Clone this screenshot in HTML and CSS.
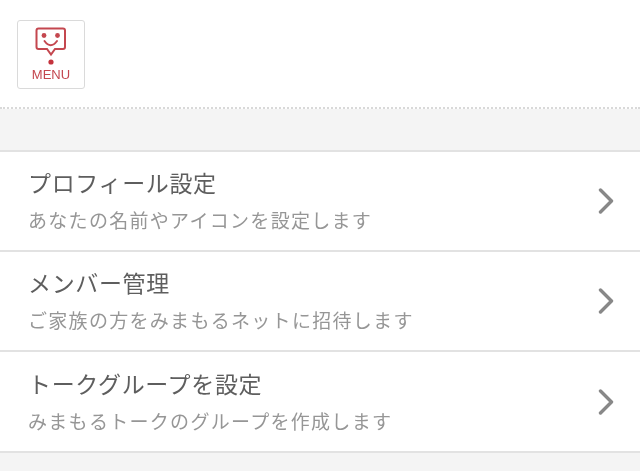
FILE: index.html
```html
<!DOCTYPE html>
<html lang="ja">
<head>
<meta charset="utf-8">
<title>メニュー</title>
<link rel="stylesheet" href="styles.css">
</head>
<body>
<div class="page">
<header class="header">
  <button class="menu-btn" type="button">
    <svg class="menu-icon" width="32" height="42" viewBox="0 0 32 42" fill="none">
      <path d="M3.5 1.5H28Q30 1.5 30 3.5V20Q30 22 28 22H20L16 27.5L12 22H3.5Q1.5 22 1.5 20V3.5Q1.5 1.5 3.5 1.5Z" stroke="#c4474f" stroke-width="2"/>
      <circle cx="9" cy="8.5" r="2.4" fill="#c4474f"/>
      <circle cx="22.5" cy="8.5" r="2.4" fill="#c4474f"/>
      <path d="M9.5 14Q15.7 22.5 22 14" stroke="#c4474f" stroke-width="2" stroke-linecap="round"/>
      <circle cx="16" cy="35" r="2.6" fill="#c4333d"/>
    </svg>
    <span class="menu-label">MENU</span>
  </button>
</header>
<div class="spacer"></div>
<ul class="list">
  <li class="row">
    <div class="row-text">
      <div class="row-title">プロフィール設定</div>
      <div class="row-sub">あなたの名前やアイコンを設定します</div>
    </div>
    <svg class="chevron" width="16" height="26" viewBox="0 0 16 26" fill="none"><path d="M2.5 2L13.5 13L2.5 24" stroke="#888" stroke-width="3.4" stroke-linecap="round" stroke-linejoin="round"/></svg>
  </li>
  <li class="row">
    <div class="row-text">
      <div class="row-title">メンバー管理</div>
      <div class="row-sub">ご家族の方をみまもるネットに招待します</div>
    </div>
    <svg class="chevron" width="16" height="26" viewBox="0 0 16 26" fill="none"><path d="M2.5 2L13.5 13L2.5 24" stroke="#888" stroke-width="3.4" stroke-linecap="round" stroke-linejoin="round"/></svg>
  </li>
  <li class="row">
    <div class="row-text">
      <div class="row-title">トークグループを設定</div>
      <div class="row-sub">みまもるトークのグループを作成します</div>
    </div>
    <svg class="chevron" width="16" height="26" viewBox="0 0 16 26" fill="none"><path d="M2.5 2L13.5 13L2.5 24" stroke="#888" stroke-width="3.4" stroke-linecap="round" stroke-linejoin="round"/></svg>
  </li>
</ul>
</div>
</body>
</html>
```
FILE: styles.css
```css
* { box-sizing: border-box; }
html, body { margin: 0; padding: 0; height: 100%; }
body {
  background: #f4f4f4;
  font-family: "Noto Sans CJK JP", "Liberation Sans", sans-serif;
  overflow: hidden;
}
.page { filter: blur(0.4px); }
.header {
  height: 109px;
  background: #fff;
  border-bottom: 2px dotted #d9d9d9;
  padding: 20px 0 0 17px;
}
.menu-btn {
  width: 68px;
  height: 69px;
  padding: 6px 0 0;
  display: flex;
  flex-direction: column;
  align-items: center;
  background: #fff;
  border: 1px solid #dadada;
  border-radius: 3px;
}
.menu-icon { display: block; }
.menu-label {
  font-family: "Liberation Sans", sans-serif;
  font-size: 13px;
  line-height: 14px;
  margin-top: -1px;
  color: #c4474f;
}
.spacer { height: 41px; }
.list {
  list-style: none;
  margin: 0;
  padding: 0;
  background: #fff;
  border-top: 2px solid #e2e2e2;
}
.row {
  height: 100px;
  padding: 0 26px 0 28px;
  display: flex;
  align-items: center;
  justify-content: space-between;
  border-bottom: 2px solid #e2e2e2;
}
.row:last-child { height: 101px; }
.row-title {
  font-size: 23px;
  line-height: 38px;
  letter-spacing: 0.65px;
  color: #5e5e5e;
}
.row-sub {
  font-size: 19px;
  line-height: 38px;
  letter-spacing: 1.3px;
  color: #969696;
}
```
